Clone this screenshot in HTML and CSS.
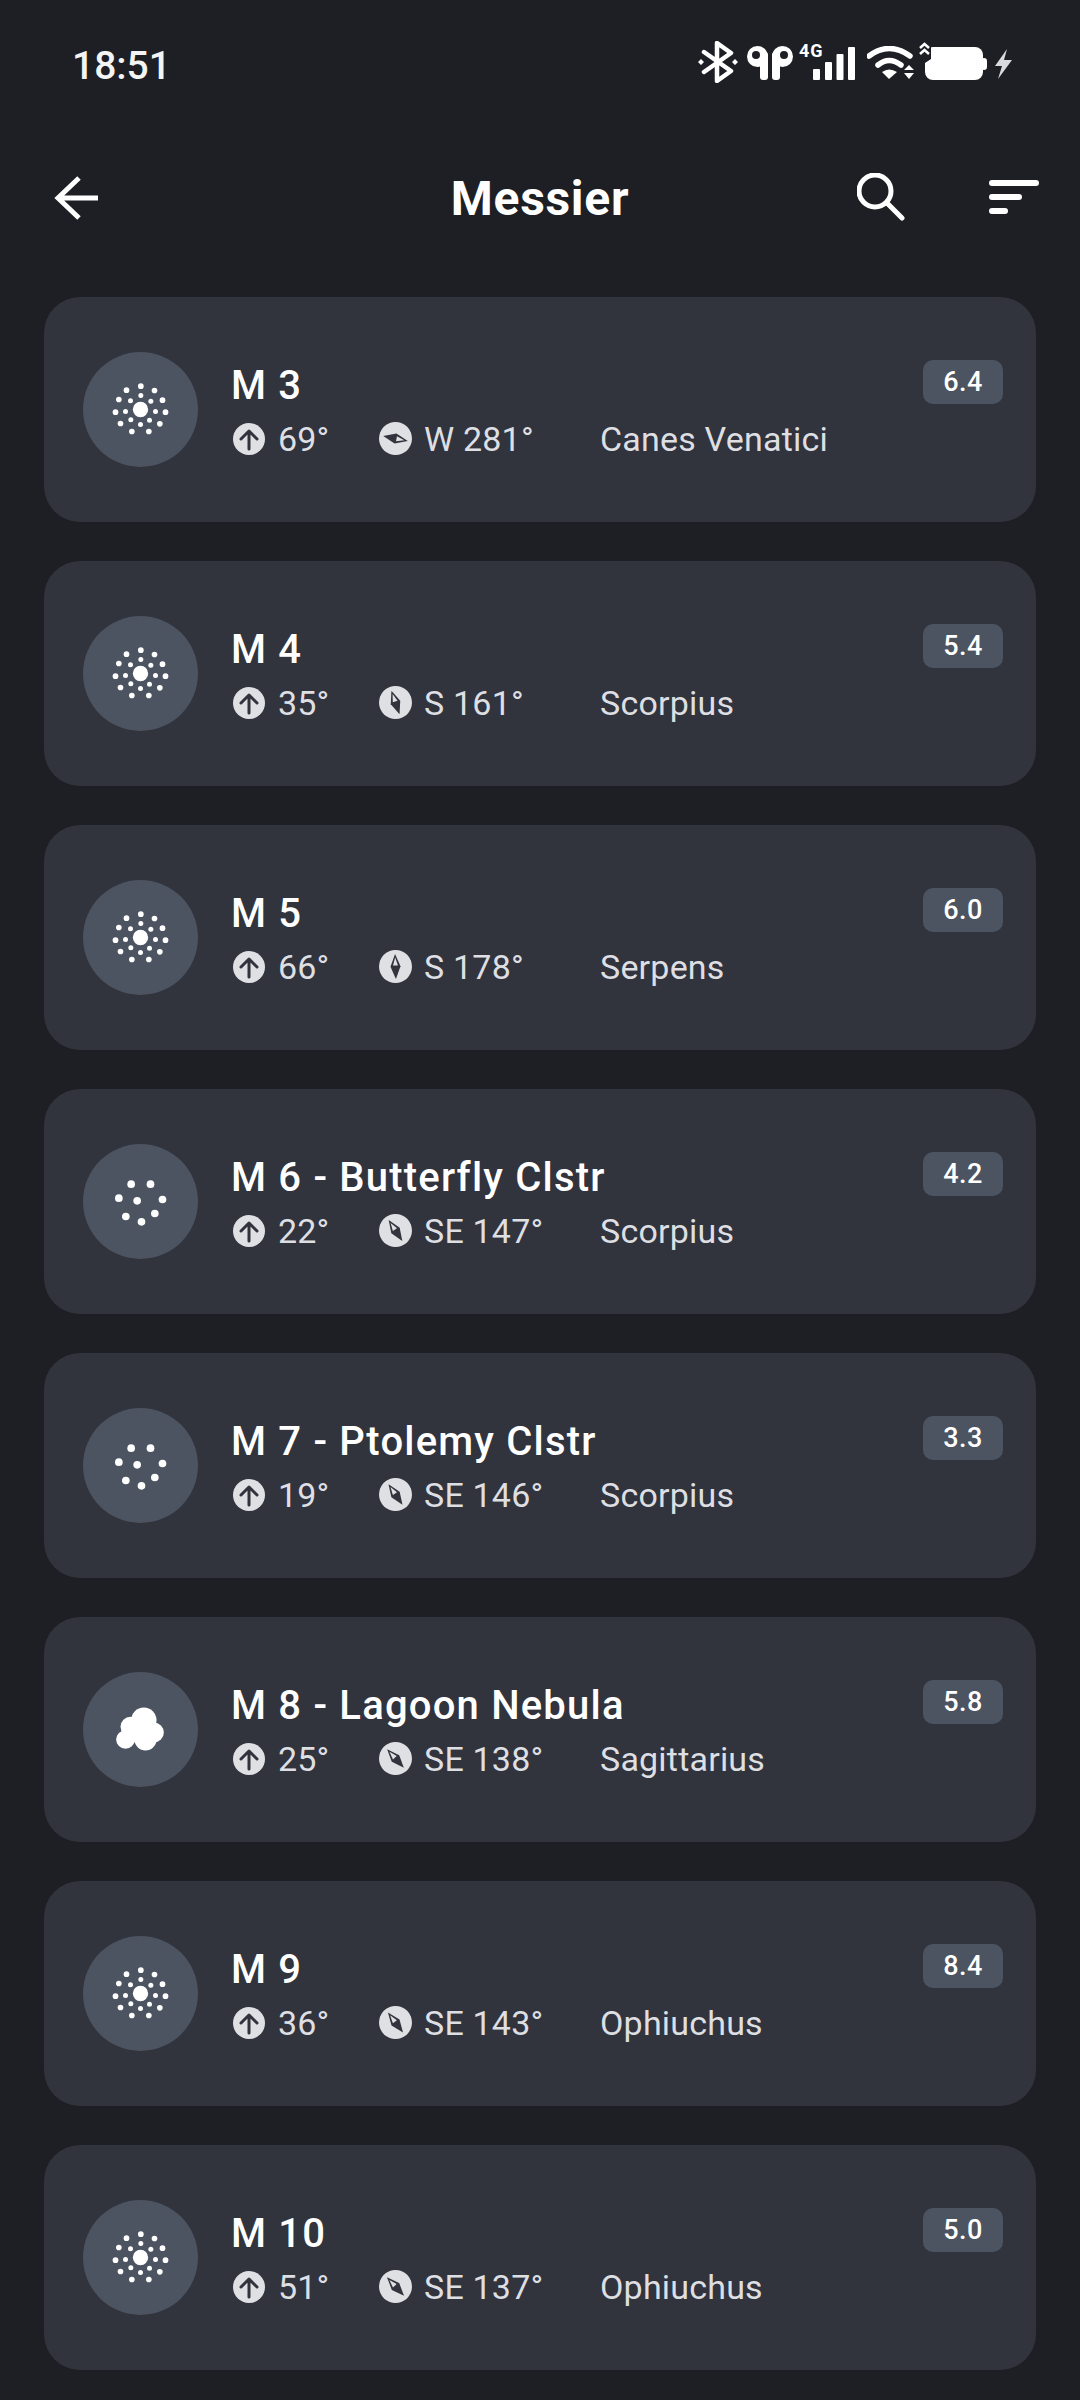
FILE: index.html
```html
<!DOCTYPE html>
<html lang="en">
<head>
    <meta charset="UTF-8">
    <meta name="viewport" content="width=device-width, initial-scale=1.0">
    <link rel="stylesheet" href="styles.css">
    <title>Messier</title>
</head>
<body>
    <!-- shared icons -->
    <svg class="defs" width="0" height="0">
        <symbol id="glob" viewBox="-172.5 -172.5 345 345">
            <g fill="#fff">
                <circle cx="0" cy="0" r="23"/>
                <circle cx="-45" cy="6" r="7.5"/><circle cx="-30" cy="-26" r="7.5"/><circle cx="1" cy="-42" r="7.5"/><circle cx="31" cy="-25" r="7.5"/>
                <circle cx="45" cy="6" r="7.5"/><circle cx="27" cy="32" r="7.5"/><circle cx="0" cy="45" r="7.5"/><circle cx="-29" cy="31" r="7.5"/>
                <circle cx="-75" cy="8" r="8.5"/><circle cx="-65" cy="-30" r="8.5"/><circle cx="-42" cy="-58" r="8.5"/><circle cx="1" cy="-70" r="8.5"/>
                <circle cx="42" cy="-57" r="8.5"/><circle cx="66" cy="-28" r="8.5"/><circle cx="75" cy="8" r="8.5"/><circle cx="58" cy="43" r="8.5"/>
                <circle cx="25" cy="66" r="8.5"/><circle cx="-26" cy="66" r="8.5"/><circle cx="-60" cy="42" r="8.5"/>
            </g>
        </symbol>
        <symbol id="open" viewBox="-172.5 -172.5 345 345">
            <g fill="#fff">
                <circle cx="-28" cy="-52" r="11.5"/><circle cx="30" cy="-52" r="11.5"/><circle cx="-65" cy="-10" r="11.5"/><circle cx="-10" cy="-2" r="11.5"/>
                <circle cx="66" cy="-6" r="11.5"/><circle cx="-44" cy="45" r="11.5"/><circle cx="3" cy="61" r="11.5"/><circle cx="43" cy="36" r="11.5"/>
            </g>
        </symbol>
        <symbol id="nebula" viewBox="-172.5 -172.5 345 345">
            <g fill="#fff">
                <circle cx="10" cy="-28" r="38"/><circle cx="-30" cy="-8" r="30"/><circle cx="-45" cy="30" r="28"/>
                <circle cx="15" cy="30" r="33"/><circle cx="40" cy="9" r="30"/><circle cx="-8" cy="10" r="30"/>
            </g>
        </symbol>
        <symbol id="alt" viewBox="0 0 32 32">
            <circle cx="16" cy="16" r="16" fill="#dfe0e3"/>
            <path d="M16 26V8.5M8 16l8-8 8 8" fill="none" stroke="#31333d" stroke-width="3" stroke-linecap="round" stroke-linejoin="round"/>
        </symbol>
        <symbol id="needle" viewBox="0 0 33 33">
            <path d="M16.5 4 21.5 16.5 16.5 29 11.5 16.5Z" fill="#31333d"/>
            <path d="M16.5 25.5 19 17.5H14Z" fill="#dfe0e3"/>
        </symbol>
    </svg>

    <!-- status bar -->
    <div class="status">
        <span class="time">18:51</span>
        <div class="sicons">
            <svg class="s-bt" width="40" height="42" viewBox="0 0 40 42">
                <path d="M6 11 33 30 19 40V2L33 12 6 31" fill="none" stroke="#fff" stroke-width="4.5" stroke-linejoin="round" stroke-linecap="round"/>
                <path d="M3 18 6 21 3 24 0 21ZM37 18 40 21 37 24 34 21Z" fill="#fff"/>
            </svg>
            <svg class="s-bud" width="46" height="34" viewBox="0 0 46 34">
                <g fill="#fff">
                    <circle cx="10.5" cy="10.5" r="10.5"/><rect x="13" y="6" width="8" height="28" rx="3"/>
                    <circle cx="35.5" cy="10.5" r="10.5"/><rect x="25" y="6" width="8" height="28" rx="3"/>
                </g>
                <circle cx="9" cy="9" r="4" fill="#1e1f24"/><circle cx="37" cy="9" r="4" fill="#1e1f24"/>
            </svg>
            <div class="s-sig">
                <span class="s-4g">4G</span>
                <svg width="42" height="33" viewBox="0 0 42 33">
                    <g fill="#fff">
                        <rect x="0" y="22" width="7" height="11" rx="1"/><rect x="12" y="15" width="7" height="18" rx="1"/>
                        <rect x="23.5" y="7" width="7" height="26" rx="1"/><rect x="35" y="0" width="7" height="33" rx="1"/>
                    </g>
                </svg>
            </div>
            <svg class="s-wifi" width="47" height="34" viewBox="0 0 47 34">
                <path d="M2 10Q22-5 43 10M11 19Q22 10 34 19" fill="none" stroke="#fff" stroke-width="5.5" stroke-linecap="round"/>
                <path d="M15 26 22 33 30 26Q22 21 15 26Z" fill="#fff"/>
                <path d="M42 19 47 24H37ZM37 27H47L42 33Z" fill="#fff"/>
            </svg>
            <svg class="s-bat" width="69" height="38" viewBox="0 0 69 38">
                <rect x="6" y="5" width="58" height="33" rx="8" fill="#fff"/>
                <rect x="62" y="16" width="6" height="12" rx="3" fill="#fff"/>
                <path d="M0 0H12V17L6 21 0 17Z" fill="#1e1f24"/>
                <path d="M1 6 5.5 2 10 6M1 12 5.5 8 10 12" fill="none" stroke="#fff" stroke-width="2.5"/>
            </svg>
            <svg class="s-bolt" width="17" height="30" viewBox="0 0 17 30">
                <path d="M12 0 0 17H7L3 30 17 11H9Z" fill="#d9dadd"/>
            </svg>
        </div>
    </div>

    <!-- app bar -->
    <div class="bar">
        <svg class="back" width="46" height="46" viewBox="0 0 46 46">
            <path d="M44 23H4M25 3 4 23 25 43" fill="none" stroke="#fff" stroke-width="5" stroke-linecap="butt"/>
        </svg>
        <div class="ttl">Messier</div>
        <div class="acts">
            <svg width="48" height="48" viewBox="0 0 48 48">
                <circle cx="18" cy="18" r="16" fill="none" stroke="#fff" stroke-width="5"/>
                <path d="M30 30 45 45" stroke="#fff" stroke-width="5" stroke-linecap="round"/>
            </svg>
            <svg width="50" height="34" viewBox="0 0 50 34">
                <path d="M3 3H47M3 17H30M3 31H16" stroke="#fff" stroke-width="6" stroke-linecap="round"/>
            </svg>
        </div>
    </div>

    <!-- list -->
    <div class="list">
        <div class="card">
            <div class="pic"><svg width="115" height="115"><use href="#glob"/></svg></div>
            <div class="info">
                <div class="name">M 3</div>
                <div class="meta">
                    <div class="m-alt"><svg width="32" height="32"><use href="#alt"/></svg>69°</div>
                    <div class="m-az"><svg viewBox="0 0 33 33" width="33" height="33"><circle cx="16.5" cy="16.5" r="16.5" fill="#dfe0e3"/><use href="#needle" width="33" height="33" transform="rotate(281 16.5 16.5)"/></svg>W 281°</div>
                    <div>Canes Venatici</div>
                </div>
            </div>
            <div class="mag">6.4</div>
        </div>
        <div class="card">
            <div class="pic"><svg width="115" height="115"><use href="#glob"/></svg></div>
            <div class="info">
                <div class="name">M 4</div>
                <div class="meta">
                    <div class="m-alt"><svg width="32" height="32"><use href="#alt"/></svg>35°</div>
                    <div class="m-az"><svg viewBox="0 0 33 33" width="33" height="33"><circle cx="16.5" cy="16.5" r="16.5" fill="#dfe0e3"/><use href="#needle" width="33" height="33" transform="rotate(161 16.5 16.5)"/></svg>S 161°</div>
                    <div>Scorpius</div>
                </div>
            </div>
            <div class="mag">5.4</div>
        </div>
        <div class="card">
            <div class="pic"><svg width="115" height="115"><use href="#glob"/></svg></div>
            <div class="info">
                <div class="name">M 5</div>
                <div class="meta">
                    <div class="m-alt"><svg width="32" height="32"><use href="#alt"/></svg>66°</div>
                    <div class="m-az"><svg viewBox="0 0 33 33" width="33" height="33"><circle cx="16.5" cy="16.5" r="16.5" fill="#dfe0e3"/><use href="#needle" width="33" height="33" transform="rotate(178 16.5 16.5)"/></svg>S 178°</div>
                    <div>Serpens</div>
                </div>
            </div>
            <div class="mag">6.0</div>
        </div>
        <div class="card">
            <div class="pic"><svg width="115" height="115"><use href="#open"/></svg></div>
            <div class="info">
                <div class="name">M 6 - Butterfly Clstr</div>
                <div class="meta">
                    <div class="m-alt"><svg width="32" height="32"><use href="#alt"/></svg>22°</div>
                    <div class="m-az"><svg viewBox="0 0 33 33" width="33" height="33"><circle cx="16.5" cy="16.5" r="16.5" fill="#dfe0e3"/><use href="#needle" width="33" height="33" transform="rotate(147 16.5 16.5)"/></svg>SE 147°</div>
                    <div>Scorpius</div>
                </div>
            </div>
            <div class="mag">4.2</div>
        </div>
        <div class="card">
            <div class="pic"><svg width="115" height="115"><use href="#open"/></svg></div>
            <div class="info">
                <div class="name">M 7 - Ptolemy Clstr</div>
                <div class="meta">
                    <div class="m-alt"><svg width="32" height="32"><use href="#alt"/></svg>19°</div>
                    <div class="m-az"><svg viewBox="0 0 33 33" width="33" height="33"><circle cx="16.5" cy="16.5" r="16.5" fill="#dfe0e3"/><use href="#needle" width="33" height="33" transform="rotate(146 16.5 16.5)"/></svg>SE 146°</div>
                    <div>Scorpius</div>
                </div>
            </div>
            <div class="mag">3.3</div>
        </div>
        <div class="card">
            <div class="pic"><svg width="115" height="115"><use href="#nebula"/></svg></div>
            <div class="info">
                <div class="name">M 8 - Lagoon Nebula</div>
                <div class="meta">
                    <div class="m-alt"><svg width="32" height="32"><use href="#alt"/></svg>25°</div>
                    <div class="m-az"><svg viewBox="0 0 33 33" width="33" height="33"><circle cx="16.5" cy="16.5" r="16.5" fill="#dfe0e3"/><use href="#needle" width="33" height="33" transform="rotate(138 16.5 16.5)"/></svg>SE 138°</div>
                    <div>Sagittarius</div>
                </div>
            </div>
            <div class="mag">5.8</div>
        </div>
        <div class="card">
            <div class="pic"><svg width="115" height="115"><use href="#glob"/></svg></div>
            <div class="info">
                <div class="name">M 9</div>
                <div class="meta">
                    <div class="m-alt"><svg width="32" height="32"><use href="#alt"/></svg>36°</div>
                    <div class="m-az"><svg viewBox="0 0 33 33" width="33" height="33"><circle cx="16.5" cy="16.5" r="16.5" fill="#dfe0e3"/><use href="#needle" width="33" height="33" transform="rotate(143 16.5 16.5)"/></svg>SE 143°</div>
                    <div>Ophiuchus</div>
                </div>
            </div>
            <div class="mag">8.4</div>
        </div>
        <div class="card">
            <div class="pic"><svg width="115" height="115"><use href="#glob"/></svg></div>
            <div class="info">
                <div class="name">M 10</div>
                <div class="meta">
                    <div class="m-alt"><svg width="32" height="32"><use href="#alt"/></svg>51°</div>
                    <div class="m-az"><svg viewBox="0 0 33 33" width="33" height="33"><circle cx="16.5" cy="16.5" r="16.5" fill="#dfe0e3"/><use href="#needle" width="33" height="33" transform="rotate(137 16.5 16.5)"/></svg>SE 137°</div>
                    <div>Ophiuchus</div>
                </div>
            </div>
            <div class="mag">5.0</div>
        </div>
    </div>
</body>
</html>
```

FILE: styles.css
```css
*{
    margin: 0;
    padding: 0;
    box-sizing: border-box;
}
body{
    width: 1080px;
    height: 2400px;
    overflow: hidden;
    background-color: #1e1f24;
    color: #fff;
    font-family: Roboto, sans-serif;
}
svg{
    display: block;
    flex-shrink: 0;
}
.defs{
    position: absolute;
}

/* status bar */
.status{
    height: 130px;
    padding: 0 68px 0 72px;
    display: flex;
    justify-content: space-between;
    align-items: center;
}
.time{
    font-size: 39px;
    font-weight: 500;
    color: #f4f4f5;
    margin-top: 1px;
}
.sicons{
    display: flex;
    align-items: flex-end;
    height: 42px;
    margin-bottom: 8px;
}
.s-bt{
    margin-bottom: -1px;
}
.s-bud{
    margin-left: 9px;
    margin-bottom: 2px;
}
.s-sig{
    margin-left: 6px;
    margin-bottom: 2px;
    width: 56px;
    height: 37px;
    position: relative;
    display: flex;
    justify-content: flex-end;
    align-items: flex-end;
}
.s-4g{
    position: absolute;
    left: 0;
    top: 0;
    font-size: 18px;
    font-weight: 700;
    line-height: 16px;
    letter-spacing: 1px;
}
.s-wifi{
    margin-left: 12px;
    margin-bottom: 2px;
}
.s-bat{
    margin-left: 5px;
    margin-bottom: 2px;
}
.s-bolt{
    margin-left: 7px;
    margin-bottom: 3px;
}

/* app bar */
.bar{
    height: 134px;
    padding: 0 41px;
    display: grid;
    grid-template-columns: 1fr auto 1fr;
    align-items: center;
}
.back{
    margin-left: 13px;
    margin-top: 2px;
}
.ttl{
    margin-top: 2px;
    font-size: 48px;
    font-weight: 700;
    letter-spacing: 0.7px;
    text-align: center;
}
.acts{
    display: flex;
    justify-content: flex-end;
    align-items: center;
    gap: 84px;
}

/* list */
.list{
    padding: 33px 44px 0;
    display: flex;
    flex-direction: column;
    gap: 39px;
}
.card{
    height: 225px;
    padding: 0 33px 0 39px;
    display: flex;
    align-items: center;
    gap: 33px;
    background-color: #31333d;
    border-radius: 36px;
}
.pic{
    width: 115px;
    height: 115px;
    border-radius: 50%;
    background-color: #4c5461;
    flex-shrink: 0;
}
.info{
    flex: 1;
    min-width: 0;
}
.name{
    font-size: 40px;
    font-weight: 500;
    line-height: 50px;
    letter-spacing: 1.2px;
}
.meta{
    margin-top: 8px;
    height: 40px;
    display: flex;
    align-items: center;
    margin-left: 2px;
    font-size: 34px;
    color: #dddfe3;
    letter-spacing: 0.2px;
}
.m-alt{
    width: 146px;
    display: flex;
    align-items: center;
    gap: 13px;
}
.m-az{
    width: 221px;
    display: flex;
    align-items: center;
    gap: 12px;
}
.mag{
    align-self: flex-start;
    margin-top: 63px;
    width: 80px;
    height: 44px;
    border-radius: 10px;
    background-color: #4c5461;
    display: flex;
    justify-content: center;
    align-items: center;
    font-size: 27px;
    font-weight: 500;
    letter-spacing: 0.5px;
}
```
